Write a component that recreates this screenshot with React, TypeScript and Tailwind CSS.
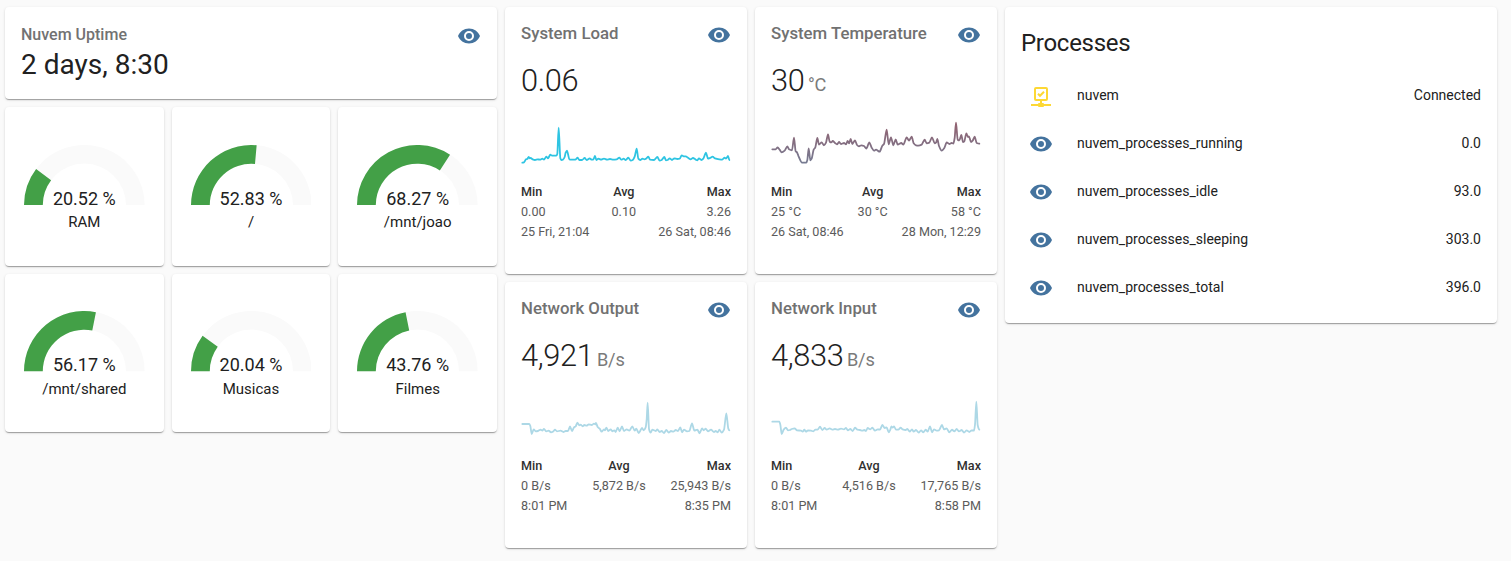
import React from "react";

type Point = [number, number];

const card =
  "rounded bg-white shadow-[0_2px_1px_-1px_rgba(0,0,0,0.2),0_1px_1px_0_rgba(0,0,0,0.14),0_1px_3px_0_rgba(0,0,0,0.12)]";

function parse(points: string): Point[] {
  return points
    .trim()
    .split(/\s+/)
    .map((p) => p.split(",").map(Number) as Point);
}

// Smooth curve through every sample, with horizontal tangents at the extremes.
function curve(pts: Point[]): string {
  const slope = pts.map((p, i) => {
    if (i === 0 || i === pts.length - 1) return 0;
    const a = (p[1] - pts[i - 1][1]) / (p[0] - pts[i - 1][0]);
    const b = (pts[i + 1][1] - p[1]) / (pts[i + 1][0] - p[0]);
    return a * b <= 0 ? 0 : (2 * a * b) / (a + b);
  });
  let d = `M${pts[0][0]},${pts[0][1]}`;
  for (let i = 1; i < pts.length; i++) {
    const [x0, y0] = pts[i - 1];
    const [x1, y1] = pts[i];
    const h = (x1 - x0) / 3.6;
    d += `C${x0 + h},${y0 + slope[i - 1] * h} ${x1 - h},${y1 - slope[i] * h} ${x1},${y1}`;
  }
  return d;
}

function Eye() {
  return (
    <svg viewBox="0 0 24 24" className="size-6 shrink-0 fill-[#44739e]">
      <path d="M12,9A3,3 0 0,0 9,12A3,3 0 0,0 12,15A3,3 0 0,0 15,12A3,3 0 0,0 12,9M12,17A5,5 0 0,1 7,12A5,5 0 0,1 12,7A5,5 0 0,1 17,12A5,5 0 0,1 12,17M12,4.5C7,4.5 2.73,7.61 1,12C2.73,16.39 7,19.5 12,19.5C17,19.5 21.27,16.39 23,12C21.27,7.61 17,4.5 12,4.5Z" />
    </svg>
  );
}

function NetworkCheck() {
  return (
    <svg viewBox="0 0 24 24" className="size-6 shrink-0 fill-[#fdd835]">
      <path d="M15,20A1,1 0 0,0 14,19H13V17H17A2,2 0 0,0 19,15V5A2,2 0 0,0 17,3H7A2,2 0 0,0 5,5V15A2,2 0 0,0 7,17H11V19H10A1,1 0 0,0 9,20H2V22H9A1,1 0 0,0 10,23H14A1,1 0 0,0 15,22H22V20H15M7,15V5H17V15H7M11,13.17L8.29,10.46L9.7,9.05L11,10.34L14.3,7.05L15.71,8.46L11,13.17Z" />
    </svg>
  );
}

function Gauge({ value, label }: { value: number; label: string }) {
  const angle = Math.PI * (1 - value / 100);
  const c = Math.cos(angle);
  const s = Math.sin(angle);
  return (
    <div className={`${card} flex flex-col items-center pt-[37.6px]`}>
      <svg viewBox="0 0 120 60" className="h-[60.3px] w-[120.6px] shrink-0">
        <path d="M0,60A60,60 0 0 1 120,60H101.5A41.5,41.5 0 0 0 18.5,60Z" fill="#fafafa" />
        <path
          d={`M0,60A60,60 0 0 1 ${60 + 60 * c},${60 - 60 * s}L${60 + 41.3 * c},${60 - 41.3 * s}A41.3,41.3 0 0 0 18.7,60Z`}
          fill="#43a047"
        />
      </svg>
      <div className="-mt-[17.2px] text-[18px] leading-[22px]">{value.toFixed(2)} %</div>
      <div className="mt-[2.3px] text-[15px] leading-[20px]">{label}</div>
    </div>
  );
}

type Graph = {
  title: string;
  value: string;
  unit?: string;
  points: string;
  stroke: string;
  min: [string, string];
  avg: string;
  max: [string, string];
};

function GraphCard({ title, value, unit, points, stroke, min, avg, max }: Graph) {
  return (
    <div className={`${card} flex flex-col px-4 pt-4`}>
      <div className="flex h-6 items-start justify-between">
        <div className="text-[16.8px] leading-[21px] font-medium text-[#717171]">{title}</div>
        <Eye />
      </div>
      <div className="mt-[15px] flex h-[42px] items-baseline tracking-[-0.37px]">
        <span className="text-[30.8px] leading-[38px] font-light">{value}</span>
        {unit && <span className="ml-[3.6px] text-[18.2px] tracking-[-0.2px] text-[#7a7a7a]">{unit}</span>}
      </div>
      <svg viewBox="18 0 630 165" className="mt-[11px] h-[55px] w-[210px] shrink-0">
        <defs>
          <linearGradient id="heat" gradientUnits="userSpaceOnUse" x1="0" y1="20" x2="0" y2="145">
            <stop offset="0" stopColor="#93616f" />
            <stop offset="1" stopColor="#767b92" />
          </linearGradient>
        </defs>
        <path
          d={curve(parse(points))}
          fill="none"
          stroke={stroke}
          strokeWidth={5.4}
          strokeLinecap="round"
          strokeLinejoin="round"
        />
      </svg>
      <div className="mt-[11.5px] flex justify-between text-[12.6px] leading-[20px] text-[#5b5b5b]">
        <div>
          <div className="font-medium text-[#303030]">Min</div>
          <div>{min[0]}</div>
          <div>{min[1]}</div>
        </div>
        <div className="text-center">
          <div className="font-medium text-[#303030]">Avg</div>
          <div>{avg}</div>
        </div>
        <div className="text-right">
          <div className="font-medium text-[#303030]">Max</div>
          <div>{max[0]}</div>
          <div>{max[1]}</div>
        </div>
      </div>
    </div>
  );
}

const graphs: Graph[] = [
  {
    title: "System Load",
    value: "0.06",
    stroke: "#2ec4e2",
    points:
      "22,143 27,142 33,133 37,132 41,126 44,130 47,129 53,133 60,135 68,133 75,134 82,131 87,134 94,125 99,130 106,119 111,122 124,122 127,116 131,38 136,130 139,135 144,134 149,126 152,113 156,107 159,117 163,133 170,134 181,134 188,128 193,135 201,135 209,129 215,135 224,130 230,134 235,134 240,123 244,135 250,131 258,134 267,131 276,134 285,132 295,134 305,133 313,128 319,134 326,131 332,135 340,128 347,137 354,134 359,125 365,101 370,131 376,135 382,131 389,133 393,131 400,125 405,134 417,135 427,126 434,137 440,135 448,126 453,136 458,135 464,130 471,135 478,130 487,132 494,131 500,121 506,124 512,124 520,129 527,133 534,129 541,133 547,136 552,130 559,135 565,131 573,113 579,131 585,129 593,125 600,130 613,133 621,134 629,128 633,131 639,123 643,135",
    min: ["0.00", "25 Fri, 21:04"],
    avg: "0.10",
    max: ["3.26", "26 Sat, 08:46"],
  },
  {
    title: "System Temperature",
    value: "30",
    unit: "°C",
    stroke: "url(#heat)",
    points:
      "22,103 32,103 38,97 44,104 50,112 59,107 67,94 72,103 81,106 87,68 92,109 96,112 101,125 111,143 124,143 127,135 131,100 136,136 140,131 146,104 151,97 157,69 162,89 170,82 177,91 183,83 189,58 194,80 199,82 203,78 210,84 216,88 222,81 228,87 237,84 243,88 248,78 252,85 257,72 262,87 270,76 276,90 282,94 289,91 297,93 304,101 313,82 320,98 327,107 333,104 344,110 352,92 357,87 365,44 371,88 378,67 385,91 392,73 398,89 409,84 415,89 425,67 432,77 440,65 446,85 453,91 460,92 470,89 479,74 485,85 493,83 501,67 509,85 513,83 517,72 522,93 530,107 538,99 545,82 553,87 560,84 565,86 569,69 573,23 578,74 583,76 589,60 594,81 598,79 604,55 609,66 612,64 618,81 623,77 629,65 635,84 643,86",
    min: ["25 °C", "26 Sat, 08:46"],
    avg: "30 °C",
    max: ["58 °C", "28 Mon, 12:29"],
  },
  {
    title: "Network Output",
    value: "4,921",
    unit: "B/s",
    stroke: "#add8e6",
    points:
      "22,102 43,102 46,108 50,132 56,118 62,124 69,123 77,119 82,122 87,117 94,124 101,122 108,127 114,125 120,119 126,124 137,122 145,126 152,123 159,123 165,109 171,123 177,112 182,109 187,98 193,106 197,104 203,109 208,105 215,107 221,103 230,105 237,101 241,103 243,99 248,111 254,116 260,125 267,118 270,121 274,113 280,123 287,118 292,124 298,121 302,126 308,113 314,124 321,109 327,123 335,118 343,122 352,109 359,122 364,116 371,129 375,124 381,114 386,121 392,112 395,89 398,38 402,117 407,128 412,119 422,123 427,118 434,126 440,123 447,129 454,120 461,128 468,123 475,125 482,120 489,123 496,112 501,127 507,119 516,124 523,123 531,100 538,122 547,119 554,130 561,115 566,121 572,116 579,124 588,119 597,126 602,123 608,127 613,119 620,128 627,119 634,70 640,116 643,121",
    min: ["0 B/s", "8:01 PM"],
    avg: "5,872 B/s",
    max: ["25,943 B/s", "8:35 PM"],
  },
  {
    title: "Network Input",
    value: "4,833",
    unit: "B/s",
    stroke: "#add8e6",
    points:
      "22,95 43,95 46,104 50,132 56,119 63,113 69,121 75,120 80,117 89,115 96,121 108,122 113,125 118,119 123,125 129,121 138,122 145,124 151,119 158,119 165,110 172,120 179,114 185,119 194,115 202,119 210,117 219,119 228,116 237,118 243,114 249,121 256,117 263,123 270,113 277,119 285,120 292,122 298,120 303,123 308,114 316,118 322,113 330,122 338,118 345,119 352,105 359,114 365,112 371,127 376,119 379,109 383,113 387,109 393,119 400,119 407,113 413,118 422,120 427,117 434,125 441,118 446,125 453,120 461,128 468,121 475,127 482,119 488,125 495,109 501,127 507,118 515,122 522,121 531,105 537,118 545,115 553,127 561,119 568,124 575,117 582,124 590,120 597,128 605,121 613,126 620,121 627,122 630,104 634,35 638,105 643,119",
    min: ["0 B/s", "8:01 PM"],
    avg: "4,516 B/s",
    max: ["17,765 B/s", "8:58 PM"],
  },
];

const gauges = [
  { value: 20.52, label: "RAM" },
  { value: 52.83, label: "/" },
  { value: 68.27, label: "/mnt/joao" },
  { value: 56.17, label: "/mnt/shared" },
  { value: 20.04, label: "Musicas" },
  { value: 43.76, label: "Filmes" },
];

const processes = [
  ["nuvem", "Connected"],
  ["nuvem_processes_running", "0.0"],
  ["nuvem_processes_idle", "93.0"],
  ["nuvem_processes_sleeping", "303.0"],
  ["nuvem_processes_total", "396.0"],
];

export default function App() {
  return (
    <div className="flex h-[561px] w-full items-start gap-2 overflow-hidden bg-[#fafafa] pt-[7px] pl-[5px] font-['Roboto',sans-serif] text-[#212121]">
      <div className="flex w-[492px] shrink-0 flex-col gap-2">
        <div className={`${card} flex h-[92px] items-start justify-between p-4`}>
          <div>
            <div className="mt-[2px] text-[16px] leading-[20px] font-medium text-[#727272]">Nuvem Uptime</div>
            <div className="mt-[3px] text-[28px] leading-[34px]">2 days, 8:30</div>
          </div>
          <div className="mt-px">
            <Eye />
          </div>
        </div>
        <div className="grid grid-cols-3 grid-rows-[158.67px_158.67px] gap-2">
          {gauges.map((g) => (
            <Gauge key={g.label} {...g} />
          ))}
        </div>
      </div>
      <div className="grid w-[492px] shrink-0 grid-cols-2 grid-rows-[266.5px_266.5px] gap-2">
        {graphs.map((g) => (
          <GraphCard key={g.title} {...g} />
        ))}
      </div>
      <div className={`${card} h-[316px] w-[492px] shrink-0 px-4`}>
        <h1 className="pt-[20px] text-[24px] leading-[32px] tracking-[-0.012em]">Processes</h1>
        <div className="mt-[12px] flex flex-col">
          {processes.map(([name, state], i) => (
            <div key={name} className="flex h-12 items-center pl-2 text-[14px] leading-5">
              <div className="mt-[2px]">{i === 0 ? <NetworkCheck /> : <Eye />}</div>
              <div className="ml-6 flex-1">{name}</div>
              <div>{state}</div>
            </div>
          ))}
        </div>
      </div>
    </div>
  );
}
